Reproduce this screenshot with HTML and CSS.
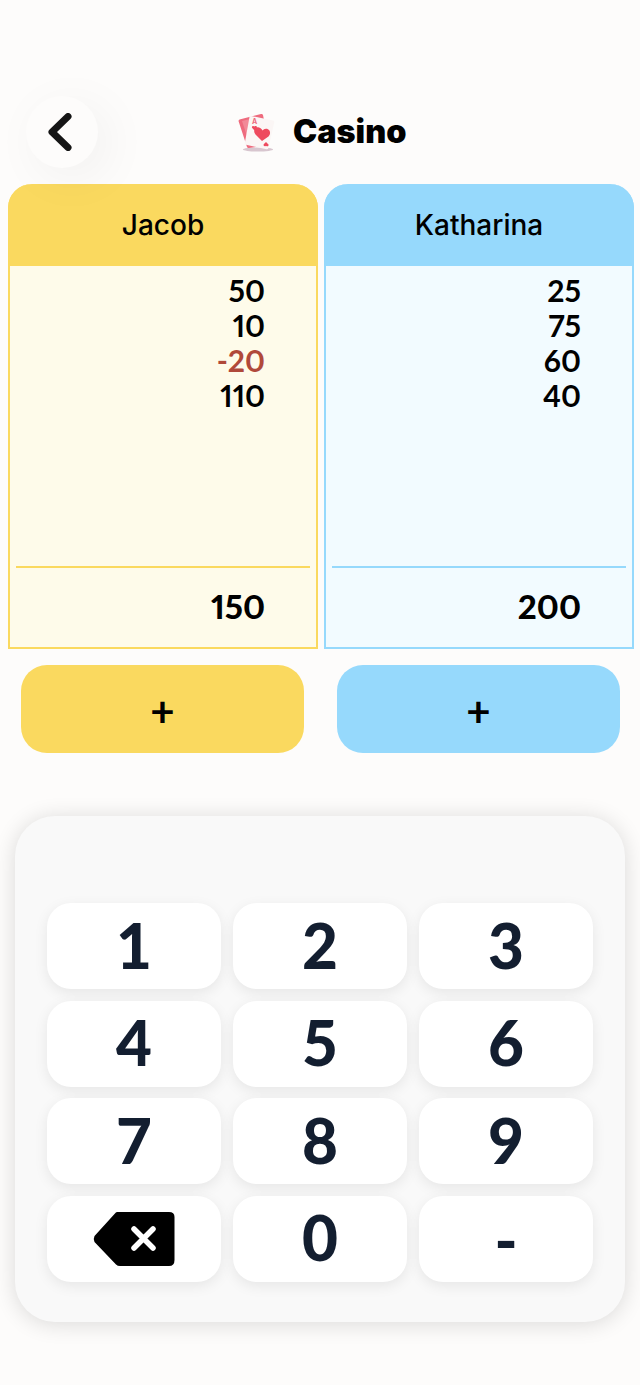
FILE: index.html
```html
<!DOCTYPE html>
<html lang="en">
<head>
    <meta charset="UTF-8">
    <title>Casino</title>
    <link rel="stylesheet" href="styles.css">
</head>
<body>
    <div class="topbar">
        <button class="back" type="button" aria-label="Back">
            <svg class="back-icon" width="26" height="38" viewBox="0 0 26 38"><path d="M22 3.500 L6 19 L22 34.500" fill="none" stroke="#151515" stroke-width="7" stroke-linecap="round" stroke-linejoin="round"/></svg>
        </button>
        <div class="title">
            <svg class="title-icon" width="38" height="42" viewBox="0 0 38 42">
                <ellipse cx="20" cy="38.500" rx="15" ry="2" fill="#d8c6cf"/>
                <path d="M1.500 8.500 L23 3 Q24.500 2.700 25 4 L31 34 L11 37 Q9.500 37.300 9 36 L0.500 10 Q0.500 9 1.500 8.500 Z" fill="#ee6b7e"/>
                <path d="M4 10 L20 6 L26 33 L12 34 Z" fill="#f28a98"/>
                <path d="M13 5 L35 9.500 Q36.500 10 36.200 11.500 L30.500 37 Q30 38.500 28.500 38.200 L8 33.800 Q6.500 33.300 6.800 32 L11.500 6 Q11.800 4.800 13 5 Z" fill="#fbf6f5"/>
                <path d="M24 30 L17.500 23.500 C14.500 20 17 15 21 16.500 C22.800 17.200 23.800 18.300 24.500 19.500 C25.500 18.300 27 17.300 29 17.800 C32.500 18.800 33 23 30.500 25.500 Z" fill="#ee4a5e"/>
                <text class="pip" x="14" y="13">A</text>
                <path d="M16.500 19.500 L14 16.800 C13.500 15 15.500 14.300 16.500 15.600 C17.500 14.500 19.500 15.300 18.800 17 Z" fill="#ee4a5e"/>
                <path d="M28 31 L30.500 33.500 C31 35.300 29 36 28 34.700 C27 35.800 25 35 25.700 33.300 Z" fill="#ee4a5e"/>
            </svg>
            <h1>Casino</h1>
        </div>
    </div>

    <div class="players">
        <div class="player">
            <section class="card card-yellow">
                <div class="card-head">Jacob</div>
                <div class="scores">
                    <div>50</div>
                    <div>10</div>
                    <div class="negative">-20</div>
                    <div>110</div>
                </div>
                <div class="total">150</div>
            </section>
            <button class="add add-yellow" type="button">+</button>
        </div>
        <div class="player">
            <section class="card card-blue">
                <div class="card-head">Katharina</div>
                <div class="scores">
                    <div>25</div>
                    <div>75</div>
                    <div>60</div>
                    <div>40</div>
                </div>
                <div class="total">200</div>
            </section>
            <button class="add add-blue" type="button">+</button>
        </div>
    </div>

    <div class="keypad">
        <button class="key" type="button">1</button>
        <button class="key" type="button">2</button>
        <button class="key" type="button">3</button>
        <button class="key" type="button">4</button>
        <button class="key" type="button">5</button>
        <button class="key" type="button">6</button>
        <button class="key" type="button">7</button>
        <button class="key" type="button">8</button>
        <button class="key" type="button">9</button>
        <button class="key" type="button" aria-label="Delete">
            <svg width="82" height="56" viewBox="0 0 82 56">
                <path d="M24 1 H76 Q81.500 1 81.500 6 V49 Q81.500 55 76 55 H27 Q24.500 55 23 53.500 L1.500 31 Q0 28 1.500 25 L21.500 3 Q23 1 24 1 Z" fill="#000"/>
                <path d="M41 18 L60 37 M60 18 L41 37" stroke="#fff" stroke-width="5.500" stroke-linecap="round"/>
            </svg>
        </button>
        <button class="key" type="button">0</button>
        <button class="key key-minus" type="button">-</button>
    </div>
</body>
</html>
```

FILE: styles.css
```css
body {
    margin: 0;
    height: 1385px;
    overflow: hidden;
    background-color: #fdfcfb;
    font-family: Lato, "Noto Sans", sans-serif;
    font-variant-numeric: proportional-nums;
    color: #000;
}
button {
    font-family: inherit;
    border: none;
    cursor: pointer;
}
.topbar {
    position: relative;
    z-index: 1;
    display: flex;
    align-items: center;
    padding: 96px 0 0 26px;
    height: 72px;
}
.back {
    flex: none;
    width: 72px;
    height: 72px;
    padding: 0;
    border-radius: 50%;
    background: #fdfcfb;
    display: flex;
    align-items: center;
    justify-content: center;
    box-shadow: 10px 10px 50px rgba(0, 0, 0, 0.05);
}
.back-icon {
    margin-right: 7px;
}
.title {
    display: flex;
    align-items: center;
    gap: 17px;
    margin-left: 140px;
}
.pip {
    font-family: Inter, sans-serif;
    font-size: 7px;
    font-weight: 700;
    fill: #ee6b7e;
}
h1 {
    margin: 0 0 2px;
    font-family: Inter, sans-serif;
    font-size: 32.400px;
    font-weight: 900;
}
.players {
    display: flex;
    gap: 6px;
    padding: 16px 6px 0 8px;
}
.player {
    width: 310px;
}
.card {
    height: 465px;
    box-sizing: border-box;
    border: 2px solid;
    border-top: none;
    border-radius: 24px 24px 0 0;
    display: flex;
    flex-direction: column;
}
.card-yellow {
    border-color: #fad95f;
    background: #fefbea;
}
.card-blue {
    border-color: #96d9fc;
    background: #f2fbff;
}
.card-head {
    height: 82px;
    margin: 0 -2px;
    border-radius: 24px 24px 0 0;
    display: flex;
    align-items: center;
    justify-content: center;
    font-family: Inter, sans-serif;
    font-size: 28px;
    font-weight: 500;
}
.card-yellow .card-head {
    background: #fad95f;
}
.card-blue .card-head {
    background: #96d9fc;
}
.scores {
    height: 302px;
    margin: 0 6px;
    padding: 7px 45px 0 0;
    box-sizing: border-box;
    border-bottom: 2px solid;
    text-align: right;
    font-size: 30px;
    font-weight: 700;
    line-height: 35px;
}
.card-yellow .scores {
    border-color: #fad95f;
}
.card-blue .scores {
    border-color: #96d9fc;
}
.negative {
    color: #b0493a;
}
.total {
    padding: 18px 51px 0 0;
    text-align: right;
    font-size: 33px;
    font-weight: 900;
    line-height: 40px;
}
.add {
    display: block;
    width: 283px;
    height: 88px;
    margin: 16px 0 0 13px;
    padding: 3px 0 0;
    border-radius: 26px;
    font-size: 42px;
    font-weight: 700;
    line-height: 1;
    color: #000;
}
.add-yellow {
    background: #fad95f;
}
.add-blue {
    background: #96d9fc;
}
.keypad {
    width: 610px;
    height: 506px;
    box-sizing: border-box;
    margin: 63px 0 0 15px;
    padding: 87px 32px 0;
    border-radius: 40px;
    background: #f9f9f9;
    box-shadow: 0 2px 22px rgba(0, 0, 0, 0.14);
    display: grid;
    grid-template-columns: repeat(3, 174px);
    grid-auto-rows: 86px;
    column-gap: 12px;
    row-gap: 11.670px;
}
.key {
    padding: 0 0 3px;
    border-radius: 24px;
    background: #fff;
    box-shadow: 0 4px 14px rgba(0, 0, 0, 0.08);
    display: flex;
    align-items: center;
    justify-content: center;
    font-size: 62px;
    font-weight: 900;
    color: #131e30;
}
.key-minus {
    padding: 2px 0 0;
}
.key svg {
    width: 82px;
    height: 56px;
    margin-top: 3px;
}
```
